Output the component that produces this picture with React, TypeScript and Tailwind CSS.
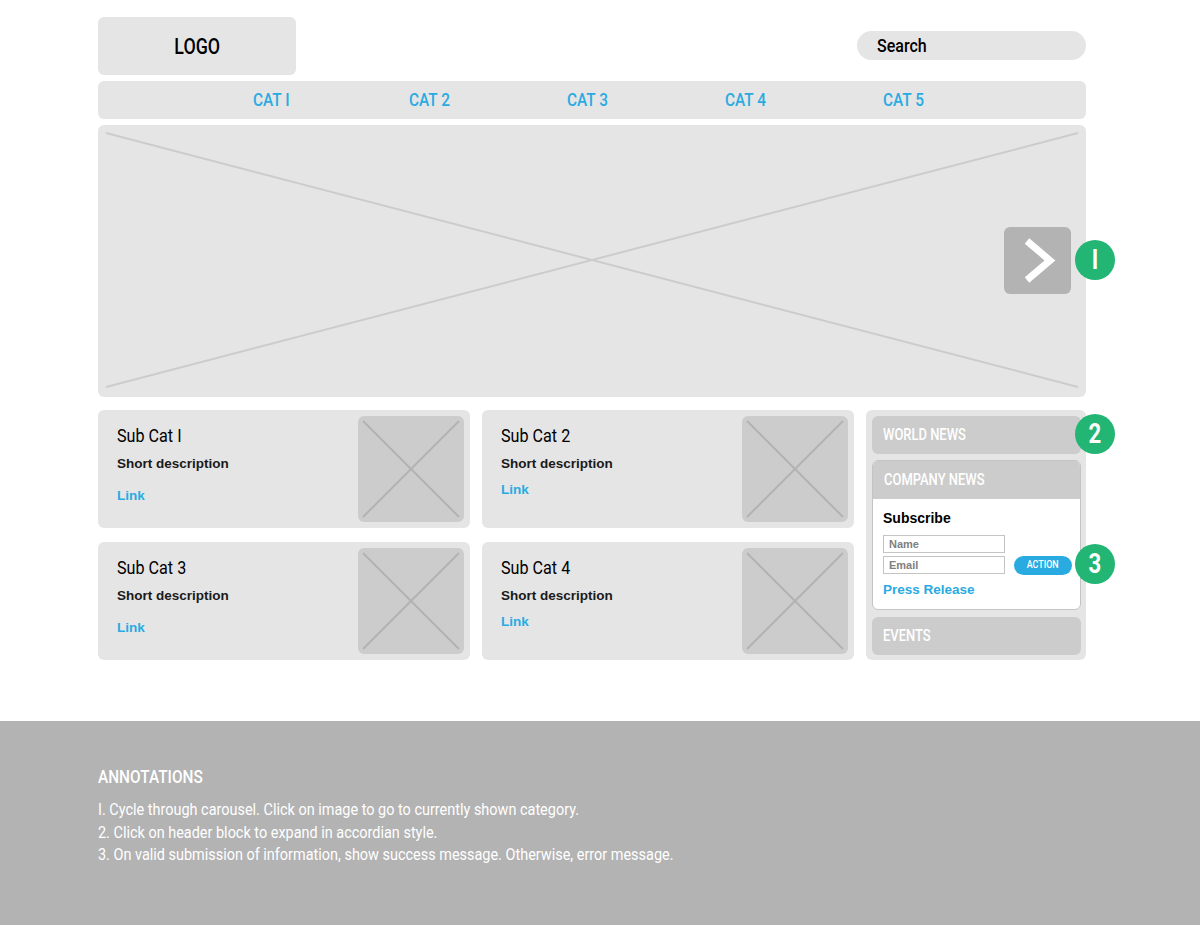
const cond = "font-['Roboto',sans-serif]";
const sans = "font-['Liberation_Sans',Arial,sans-serif]";

// narrow type: the mock uses a condensed face, squeeze Roboto to match
function Narrow({
  children,
  center,
  s = "scale-x-[0.84]",
}: {
  children: React.ReactNode;
  center?: boolean;
  s?: string;
}) {
  return (
    <span className={`inline-block whitespace-nowrap ${s} ${center ? "origin-center" : "origin-left"}`}>
      {children}
    </span>
  );
}

function Badge({ n, className }: { n: string; className: string }) {
  return (
    <div
      className={`absolute w-10 h-10 rounded-full bg-[#22b573] text-white flex items-center justify-center text-[27px] font-bold ${cond} ${className}`}
    >
      <Narrow center s="scale-x-[0.82]">{n}</Narrow>
    </div>
  );
}

function Placeholder() {
  return (
    <div className="w-[106px] h-[106px] rounded-md bg-[#cccccc] shrink-0">
      <svg width="106" height="106" viewBox="0 0 106 106">
        <line x1="5" y1="5" x2="101" y2="101" stroke="#b3b3b3" strokeWidth="2" />
        <line x1="101" y1="5" x2="5" y2="101" stroke="#b3b3b3" strokeWidth="2" />
      </svg>
    </div>
  );
}

function Card({ title, linkTop }: { title: string; linkTop: string }) {
  return (
    <div className="h-[118px] rounded-md bg-[#e5e5e5] flex justify-between p-[6px]">
      <div className="pl-[13px] pt-[8px]">
        <div className={`text-[19px] leading-6 text-black ${cond}`}>
          <Narrow s="scale-x-[0.85]">{title}</Narrow>
        </div>
        <div className={`mt-[6px] text-[13.5px] leading-5 font-bold text-[#1a1a1a] ${sans}`}>Short description</div>
        <div className={`${linkTop} text-[13.5px] leading-5 font-bold text-[#29abe2] ${sans}`}>Link</div>
      </div>
      <Placeholder />
    </div>
  );
}

function Tab({ label }: { label: string }) {
  return (
    <div className={`h-[38px] bg-[#cccccc] flex items-center pl-[11px] text-[16px] font-medium text-white ${cond}`}>
      <Narrow s="scale-x-[0.81]">{label}</Narrow>
    </div>
  );
}

export default function App() {
  const cats = ["CAT I", "CAT 2", "CAT 3", "CAT 4", "CAT 5"];
  return (
    <div className="w-[1200px] min-h-[925px] bg-white flex flex-col">
      <div className="w-[988px] ml-[98px] pt-[17px]">
        <div className="flex justify-between items-start">
          <div className={`w-[198px] h-[58px] rounded-md bg-[#e5e5e5] flex items-center justify-center text-[22px] font-medium text-black ${cond}`}>
            <Narrow center s="scale-x-[0.81]">LOGO</Narrow>
          </div>
          <div className={`mt-[14px] w-[229px] h-[29px] rounded-full bg-[#e5e5e5] flex items-center pl-5 text-[18px] font-medium text-black ${cond}`}>
            <Narrow s="scale-x-[0.89]">Search</Narrow>
          </div>
        </div>

        <div className={`mt-[6px] h-[38px] rounded-md bg-[#e5e5e5] flex items-center pl-[155px] text-[19px] font-medium text-[#29abe2] ${cond}`}>
          {cats.map((c, i) => (
            <div key={c} className={i === 0 ? "w-[156px]" : "w-[158px]"}>
              <Narrow s="scale-x-[0.81]">{c}</Narrow>
            </div>
          ))}
        </div>

        <div className="relative mt-[6px] h-[272px] rounded-md bg-[#e5e5e5]">
          <svg className="absolute inset-0" width="988" height="272" viewBox="0 0 988 272">
            <line x1="8" y1="8" x2="980" y2="262" stroke="#cccccc" strokeWidth="2" />
            <line x1="980" y1="8" x2="8" y2="262" stroke="#cccccc" strokeWidth="2" />
          </svg>
          <div className="absolute left-[906px] top-[102px] w-[67px] h-[67px] rounded-md bg-[#b3b3b3]">
            <svg width="67" height="67" viewBox="0 0 67 67">
              <polyline points="23,14 46,33.5 23,53" fill="none" stroke="#fff" strokeWidth="7" strokeLinejoin="miter" />
            </svg>
          </div>
          <Badge n="I" className="left-[977px] top-[115px]" />
        </div>

        <div className="mt-[13px] flex gap-3">
          <div className="w-[756px] grid grid-cols-2 gap-x-3 gap-y-[14px]">
            <Card title="Sub Cat I" linkTop="mt-[12px]" />
            <Card title="Sub Cat 2" linkTop="mt-[6px]" />
            <Card title="Sub Cat 3" linkTop="mt-[12px]" />
            <Card title="Sub Cat 4" linkTop="mt-[6px]" />
          </div>

          <div className="relative w-[220px] h-[250px] rounded-md bg-[#e5e5e5] pt-[6px] pl-[6px] pr-[5px] flex flex-col">
            <div className="rounded-md overflow-hidden">
              <Tab label="WORLD NEWS" />
            </div>
            <div className="mt-[6px] rounded-md border border-[#c4c4c4] bg-white overflow-hidden">
              <Tab label="COMPANY NEWS" />
              <div className={`h-[110px] pl-[10px] pt-[9px] ${sans}`}>
                <div className="text-[14px] leading-5 font-bold text-black">Subscribe</div>
                <div className="mt-[7px] flex items-end">
                  <div className="flex flex-col gap-[3px]">
                    <div className="w-[122px] h-[18px] border border-[#c4c4c4] text-[11px] font-bold text-[#808080] pl-[5px] leading-4">Name</div>
                    <div className="w-[122px] h-[18px] border border-[#c4c4c4] text-[11px] font-bold text-[#808080] pl-[5px] leading-4">Email</div>
                  </div>
                  <div className={`ml-[9px] mb-[-1px] w-[58px] h-[19px] rounded-full bg-[#29abe2] text-white text-[11px] font-medium flex items-center justify-center ${cond}`}>
                    <Narrow center s="scale-x-[0.81]">ACTION</Narrow>
                  </div>
                </div>
                <div className="mt-[6px] text-[13.5px] leading-5 font-bold text-[#29abe2]">Press Release</div>
              </div>
            </div>
            <div className="mt-[7px] rounded-md overflow-hidden">
              <Tab label="EVENTS" />
            </div>
            <Badge n="2" className="left-[209px] top-[4px]" />
            <Badge n="3" className="left-[209px] top-[134px]" />
          </div>
        </div>
      </div>

      <div className={`mt-[61px] h-[204px] bg-[#b3b3b3] text-white ${cond}`}>
        <div className="w-[988px] ml-[98px] pt-[44px]">
          <div className="text-[19px] leading-6 font-medium">
            <Narrow s="scale-x-[0.81]">ANNOTATIONS</Narrow>
          </div>
          <div className="mt-[9px] text-[17px] leading-[22.5px]">
            <div>
              <Narrow s="scale-x-[0.85]">I. Cycle through carousel. Click on image to go to currently shown category.</Narrow>
            </div>
            <div>
              <Narrow s="scale-x-[0.85]">2. Click on header block to expand in accordian style.</Narrow>
            </div>
            <div>
              <Narrow s="scale-x-[0.85]">3. On valid submission of information, show success message. Otherwise, error message.</Narrow>
            </div>
          </div>
        </div>
      </div>
    </div>
  );
}
